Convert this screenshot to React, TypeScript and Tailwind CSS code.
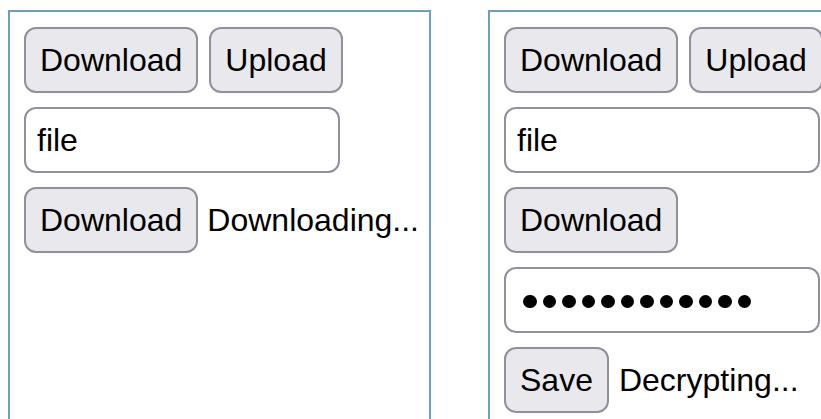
import { useState } from 'react'

const btn =
  'h-[66px] px-[14px] border-2 border-[#8f8f9d] rounded-[12px] bg-[#e9e9ed] text-black leading-none shrink-0'
const field =
  'h-[66px] w-[316px] px-[11px] border-2 border-[#8f8f9d] rounded-[12px] bg-white text-black outline-none shrink-0'

// masked key field, drawn as a row of discs
function PasswordBox({ length }: { length: number }) {
  return (
    <div className="h-[66px] w-[316px] pl-[17px] pt-[3px] border-2 border-[#8f8f9d] rounded-[12px] bg-white flex items-center gap-[6px] shrink-0">
      {Array.from({ length }).map((_, i) => (
        <span key={i} className="w-[13.5px] h-[13.5px] rounded-full bg-black" />
      ))}
    </div>
  )
}

function Panel({ decrypt }: { decrypt?: boolean }) {
  const [name, setName] = useState('file')

  return (
    <div className="w-[423px] h-[430px] shrink-0 border-2 border-[#6f9fb6] pl-[14px] pt-[15px] flex flex-col gap-[14px]">
      <div className="flex gap-[11px]">
        <button className={btn}>Download</button>
        <button className={`${btn} px-[13.5px]`}>Upload</button>
      </div>
      <input className={field} value={name} onChange={(e) => setName(e.target.value)} />
      {decrypt ? (
        <>
          <div className="flex">
            <button className={btn}>Download</button>
          </div>
          <PasswordBox length={12} />
          <div className="flex items-center gap-[10px]">
            <button className={`${btn} px-[13.5px]`}>Save</button>
            <span>Decrypting...</span>
          </div>
        </>
      ) : (
        <div className="flex items-center gap-[9px]">
          <button className={btn}>Download</button>
          <span>Downloading...</span>
        </div>
      )}
    </div>
  )
}

export default function App() {
  return (
    <div className="w-[821px] h-[419px] overflow-hidden bg-white pl-[8px] pt-[10px] flex gap-[57px] text-[32px] font-['Liberation_Sans',Arial,sans-serif]">
      <Panel />
      <Panel decrypt />
    </div>
  )
}
